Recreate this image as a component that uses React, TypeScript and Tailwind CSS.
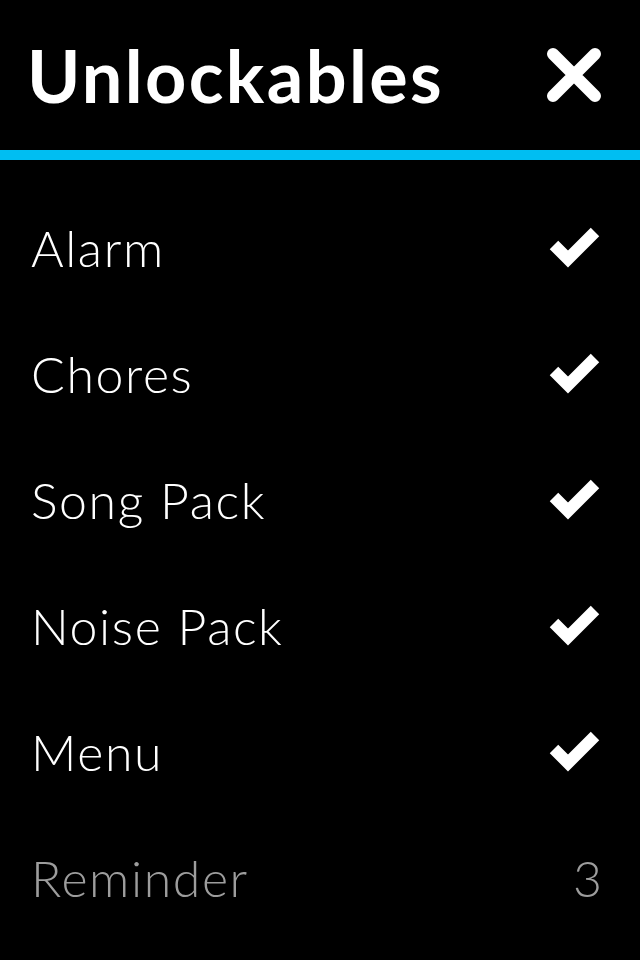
import { Fragment } from 'react'

const items = [
  { name: 'Alarm', done: true },
  { name: 'Chores', done: true },
  { name: 'Song Pack', done: true },
  { name: 'Noise Pack', done: true },
  { name: 'Menu', done: true },
  { name: 'Reminder', done: false, left: 3 },
]

function Check() {
  return (
    <svg width="52" height="44" viewBox="548 229 52 44" className="block">
      <polyline
        points="554,248 568,262 595,235"
        fill="none"
        stroke="white"
        strokeWidth={12}
        strokeLinecap="butt"
        strokeLinejoin="miter"
      />
    </svg>
  )
}

function CloseIcon() {
  return (
    <svg width="56" height="56" viewBox="0 0 56 56" className="block">
      <path d="M7 7L49 49M49 7L7 49" stroke="white" strokeWidth={12} strokeLinecap="round" />
    </svg>
  )
}

export default function App() {
  return (
    <div className="w-[640px] h-[960px] bg-black overflow-hidden text-white font-['Lato','Noto_Sans',sans-serif]">
      {/* Header */}
      <div className="h-[150px] flex items-center justify-between pl-[27px] pr-[38px]">
        <h1 className="text-[72px] font-bold leading-none tracking-[2.4px]">Unlockables</h1>
        <button className="p-0">
          <CloseIcon />
        </button>
      </div>
      <div className="h-[10px] bg-[#00bef2]" />

      {/* List */}
      <div className="pt-[25px]">
        {items.map(item => (
          <Fragment key={item.name}>
            <div className="h-[126px] flex items-center justify-between pl-[31px] pr-[40px]">
              <span
                className={`text-[50px] font-light leading-none tracking-[1.6px] ${item.done ? 'text-white' : 'text-[#9d9d9d]'}`}
              >
                {item.name}
              </span>
              {item.done ? (
                <Check />
              ) : (
                <span className="text-[50px] font-light leading-none text-[#9d9d9d] -mr-[2px]">{item.left}</span>
              )}
            </div>
          </Fragment>
        ))}
      </div>
    </div>
  )
}
